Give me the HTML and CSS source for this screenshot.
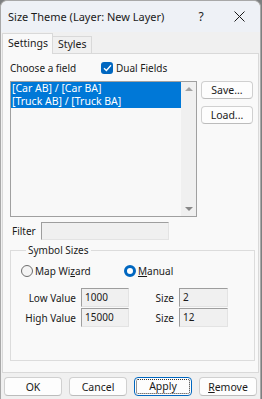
FILE: index.html
```html
<!DOCTYPE html>
<html lang="en">
<head>
    <meta charset="UTF-8">
    <meta name="viewport" content="width=device-width, initial-scale=1.0">
    <title>Size Theme</title>
    <link rel="stylesheet" href="styles.css">
</head>
<body>

    <div class="window">
        <!-- Title bar -->
        <div class="titlebar">
            <span class="title">Size Theme (Layer: New Layer)</span>
            <span class="help">?</span>
            <span class="close">
                <svg width="11" height="11" viewBox="0 0 11 11"><path d="M0.5 0.5 L10.5 10.5 M10.5 0.5 L0.5 10.5" stroke="#1a1a1a" stroke-width="1"/></svg>
            </span>
        </div>

        <!-- Tabs -->
        <div class="tabs">
            <div class="tab active">Settings</div>
            <div class="tab">Styles</div>
        </div>

        <div class="panel">
            <div class="field-row">
                <span>Choose a field</span>
                <label class="check">
                    <span class="box">
                        <svg width="9" height="8" viewBox="0 0 9 8"><path d="M1 4.2 L3.4 6.5 L8 1.3" fill="none" stroke="#fff" stroke-width="1.3"/></svg>
                    </span>
                    <span>Dual Fields</span>
                </label>
            </div>

            <div class="list-row">
                <div class="listbox">
                    <div class="items">
                        <div class="item selected">[Car AB] / [Car BA]</div>
                        <div class="item selected">[Truck AB] / [Truck BA]</div>
                    </div>
                    <div class="scrollbar">
                        <span class="arrow up"></span>
                        <span class="arrow down"></span>
                    </div>
                </div>
                <div class="side-buttons">
                    <button class="btn side">Save...</button>
                    <button class="btn side">Load...</button>
                </div>
            </div>

            <div class="filter-row">
                <span>Filter</span>
                <div class="input filter"></div>
            </div>

            <fieldset class="group">
                <legend>Symbol Sizes</legend>
                <div class="radios">
                    <label class="radio"><span class="dot"></span><span>Map Wi<u>z</u>ard</span></label>
                    <label class="radio on"><span class="dot"></span><span><u>M</u>anual</span></label>
                </div>
                <div class="values">
                    <span class="lbl">Low Value</span>
                    <div class="input val">1000</div>
                    <span class="lbl">Size</span>
                    <div class="input size">2</div>
                    <span class="lbl">High Value</span>
                    <div class="input val">15000</div>
                    <span class="lbl">Size</span>
                    <div class="input size">12</div>
                </div>
            </fieldset>
        </div>

        <div class="footer">
            <button class="btn">OK</button>
            <button class="btn">Cancel</button>
            <button class="btn focus"><span>Apply</span></button>
            <button class="btn"><u>R</u>emove</button>
        </div>
    </div>

</body>
</html>
```

FILE: styles.css
```css
* {
    margin: 0;
    padding: 0;
    box-sizing: border-box;
}

body {
    width: 262px;
    height: 399px;
    background: #7d7f80;
    font-family: "Noto Sans", "Open Sans", sans-serif;
    font-size: 10px;
    color: #1a1a1a;
    overflow: hidden;
}

.window {
    width: 261px;
    height: 399px;
    background: #f0f0f0;
    border: 1px solid #a8a8a8;
    border-bottom: none;
    border-radius: 7px 7px 0 0;
    display: flex;
    flex-direction: column;
}

.titlebar {
    height: 31px;
    display: flex;
    align-items: center;
    padding-left: 7px;
    background: #eef1f6;
    border-radius: 7px 7px 0 0;
}

.title {
    flex: 1;
    font-size: 11px;
}

.help {
    width: 38px;
    font-size: 12px;
    text-align: center;
}

.close {
    width: 38px;
    display: flex;
    justify-content: center;
    margin-right: 2px;
}

/* tabs */
.tabs {
    display: flex;
    align-items: flex-end;
    height: 21px;
    padding-left: 1px;
}

.tab {
    height: 17px;
    padding: 0 4px 0 5px;
    line-height: 15px;
    border: 1px solid #d9d9d9;
    border-bottom: none;
    background: #f0f0f0;
    font-size: 10.5px;
}

.tab.active {
    height: 21px;
    line-height: 19px;
    background: #f9f9f9;
    border-color: #d9d9d9;
    position: relative;
    top: 1px;
}

.tab + .tab {
    border-left: none;
}

.panel {
    margin: 0 1px 0 1px;
    height: 320px;
    background: #f9f9f9;
    border: 1px solid #d9d9d9;
    padding: 0 5px 0 7px;
}

.field-row {
    display: flex;
    align-items: center;
    height: 27px;
    padding-top: 1px;
}

.field-row > span {
    width: 91px;
}

.check {
    display: flex;
    align-items: center;
    gap: 3px;
}

.box {
    width: 12px;
    height: 12px;
    border-radius: 3px;
    background: #0067c0;
    display: flex;
    align-items: center;
    justify-content: center;
}

/* list */
.list-row {
    display: flex;
    gap: 4px;
    height: 136px;
}

.listbox {
    width: 190px;
    height: 136px;
    border: 1px solid #a0a0a0;
    background: #f8f8f8;
    display: flex;
}

.items {
    flex: 1;
}

.item {
    height: 13px;
    line-height: 13px;
    padding-left: 1px;
    white-space: nowrap;
    font-size: 10.5px;
}

.item.selected {
    background: #0078d7;
    color: #fff;
}

.scrollbar {
    width: 15px;
    background: #f0f0f0;
    display: flex;
    flex-direction: column;
    justify-content: space-between;
    align-items: center;
    padding: 5px 0 5px;
}

.arrow {
    width: 0;
    height: 0;
    border-left: 4px solid transparent;
    border-right: 4px solid transparent;
}

.arrow.up {
    border-bottom: 4px solid #a3a3a3;
}

.arrow.down {
    border-top: 4px solid #888;
}

.side-buttons {
    display: flex;
    flex-direction: column;
    gap: 7px;
}

.btn {
    font-family: inherit;
    font-size: 10.5px;
    color: #1a1a1a;
    background: #fdfdfd;
    border: 1px solid #d0d0d0;
    border-bottom-color: #bcbcbc;
    border-radius: 4px;
    height: 18px;
}

.btn.side {
    width: 52px;
}

/* filter */
.filter-row {
    display: flex;
    align-items: center;
    gap: 5px;
    height: 26px;
    padding-left: 2px;
    padding-top: 1px;
}

.input {
    height: 19px;
    background: #f0f0f0;
    border: 1px solid #e3e3e3;
    border-top-color: #9e9e9e;
    border-left-color: #9e9e9e;
    padding-left: 3px;
    line-height: 16px;
}

.input.filter {
    width: 128px;
    height: 18px;
}

/* group box */
.group {
    width: 245px;
    height: 118px;
    border: 1px solid #dcdcdc;
    padding: 0 0 0 10px;
}

.group legend {
    margin-left: 5px;
    padding: 0 2px;
}

.radios {
    display: flex;
    height: 22px;
    align-items: center;
    margin-top: 3px;
}

.radio {
    display: flex;
    align-items: center;
    gap: 2px;
    width: 103px;
}

.dot {
    width: 12px;
    height: 12px;
    border-radius: 50%;
    border: 1px solid #6e6e6e;
    background: #f4f4f4;
}

.radio.on .dot {
    border: 3.5px solid #0067c0;
    background: #fff;
}

.values {
    display: grid;
    grid-template-columns: 55px 48px 40px 49px;
    column-gap: 5px;
    row-gap: 1px;
    align-items: center;
    margin-top: 6px;
}

.lbl {
    text-align: right;
}

.input.val,
.input.size {
    height: 19px;
}

/* footer */
.footer {
    display: flex;
    gap: 7px;
    padding: 4px 3px 0 3px;
}

.footer .btn {
    width: 58px;
    height: 19px;
}

.btn.focus {
    border: 1px solid #0067c0;
    padding: 1px;
}

.btn.focus span {
    display: block;
    height: 100%;
    border: 1px dotted #333;
    border-radius: 2px;
    line-height: 13px;
}
```
